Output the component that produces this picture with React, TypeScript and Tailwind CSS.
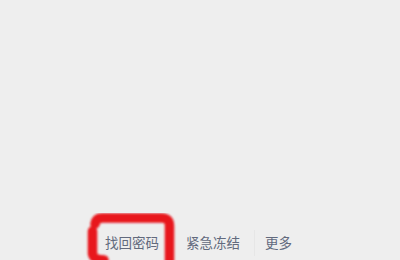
const links = ['找回密码', '紧急冻结', '更多'];

export default function App() {
  return (
    <div
      className="relative w-[400px] h-[260px] overflow-hidden bg-[#eeeeee] flex flex-col"
      style={{ fontFamily: '"Noto Sans CJK SC", "Noto Sans", sans-serif' }}
    >
      <div className="flex-1" />

      {/* bottom links */}
      <div className="flex items-center h-[30px] pl-[105px] mb-[2px] text-[13.5px] text-[#626a7d]">
        {links.map((label, i) => (
          <div key={label} className="flex items-center">
            {i > 0 && <span className={`w-px h-[26px] bg-[#e6e6e6] ${i === 1 ? 'mx-[13px]' : 'ml-[14px] mr-[10px]'}`} />}
            <span className="leading-none whitespace-nowrap">{label}</span>
          </div>
        ))}
      </div>

      {/* red hand-drawn annotation */}
      <svg className="absolute left-0 top-0 pointer-events-none" width="400" height="260" viewBox="0 0 400 260">
        <defs>
          <filter id="soft" x="-10%" y="-10%" width="120%" height="120%">
            <feGaussianBlur stdDeviation="0.8" />
          </filter>
        </defs>
        <g fill="none" stroke="#e8141b" strokeWidth="9.5" strokeLinecap="round" strokeLinejoin="round" filter="url(#soft)">
          <path d="M95 224 Q96 218 102 218 L162 218 Q169.5 218 169.5 226 L169.5 264" />
          <path d="M92.5 231 L92.5 254 Q93.5 259.5 104 260" />
        </g>
      </svg>
    </div>
  );
}
